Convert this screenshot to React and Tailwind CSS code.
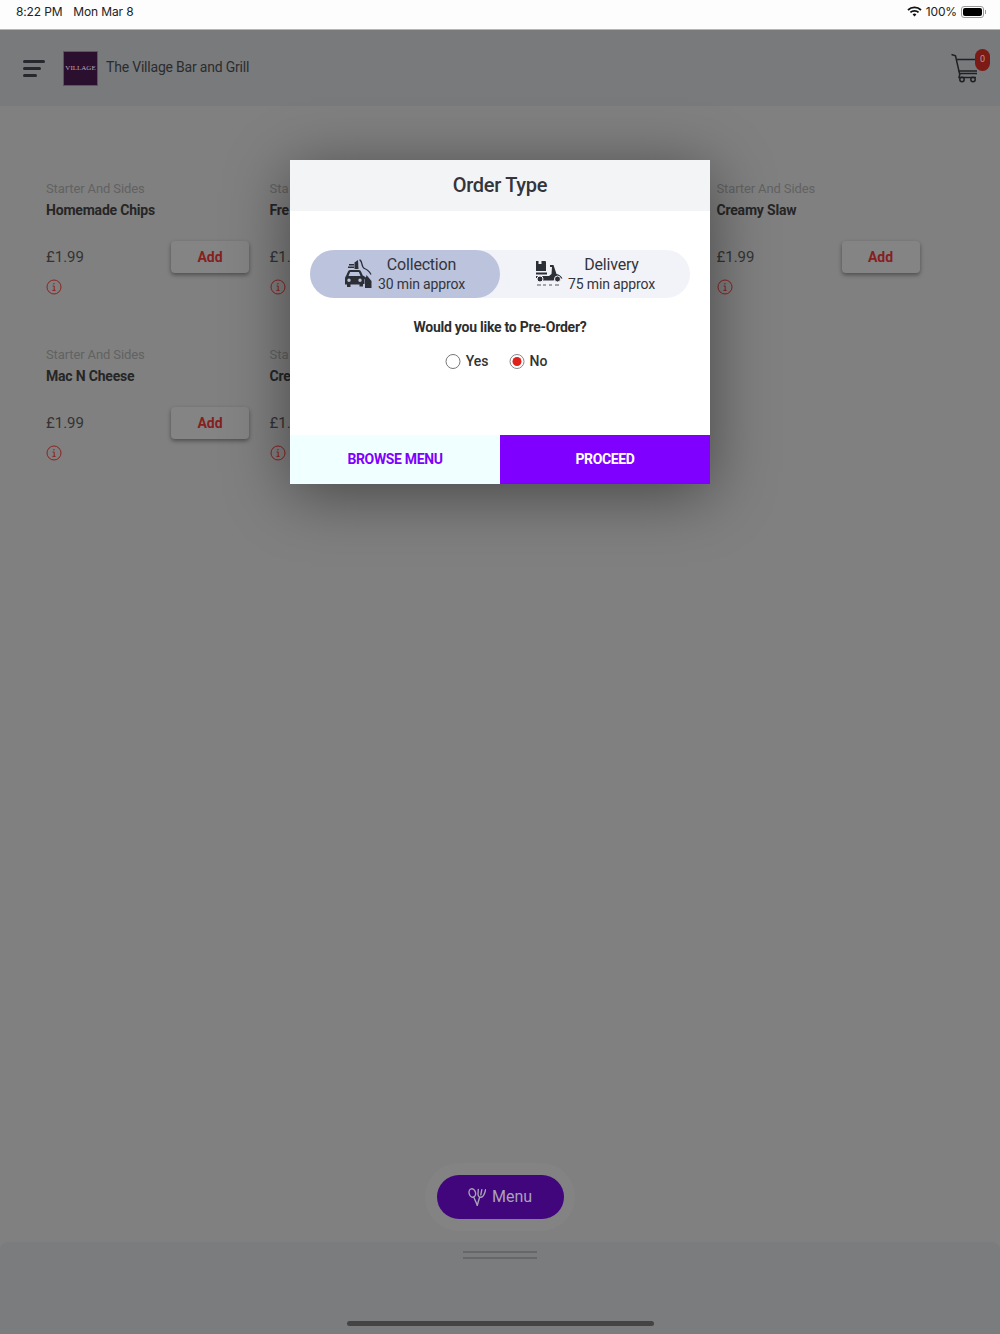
import React from "react";

function InfoIcon() {
  return (
    <svg width="16" height="16" viewBox="0 0 16 16" fill="none" stroke="#8d2222" strokeWidth="1">
      <circle cx="8" cy="8" r="7" />
      <path d="M6.600 7h1.600v4.200M6.400 11.400h3.200" />
      <circle cx="7.900" cy="4.800" r="0.700" fill="#8d2222" stroke="none" />
    </svg>
  );
}

function MenuCard({ name }) {
  return (
    <div className="w-[204px] h-[166px] shrink-0">
      <p className="text-[13px] leading-[16px] text-[#626262] tracking-[-0.12px]">Starter And Sides</p>
      <p className="mt-[3px] text-[14px] leading-[20px] font-bold tracking-[-0.2px] text-[#262626]">{name}</p>
      <div className="mt-[21px] h-[32px] flex items-center justify-between pr-[1px]">
        <span className="text-[15px] text-[#333333]">£1.99</span>
        <div className="w-[78px] h-[32px] rounded-[4px] bg-[#848484] shadow-[0_2px_4px_rgba(0,0,0,0.4)] flex items-center justify-center text-[14px] font-bold tracking-[-0.1px] text-[#861f1f]">
          Add
        </div>
      </div>
      <div className="mt-[6px]">
        <InfoIcon />
      </div>
    </div>
  );
}

// the second column sits behind the modal, only its first letters show
function PeekCard({ name }) {
  return (
    <div className="w-[21px] h-[166px] shrink-0 whitespace-nowrap">
      <p className="text-[13px] leading-[16px] text-[#626262]">Sta</p>
      <p className="mt-[3px] text-[14px] leading-[20px] font-bold tracking-[-0.2px] text-[#262626]">{name}</p>
      <div className="mt-[21px] h-[32px] flex items-center">
        <span className="text-[15px] text-[#333333]">£1.</span>
      </div>
      <div className="mt-[6px]">
        <InfoIcon />
      </div>
    </div>
  );
}

function CollectionIcon() {
  return (
    <svg width="30" height="30" viewBox="0 0 30 30" fill="#2c2f36">
      {/* car */}
      <path
        fillRule="evenodd"
        d="M2 17 4 12.500Q4.500 11 6 11h9q1.500 0 2 1.500l2 4.500q1.500.5 1.500 2v6h-1.500v2.500h-3.500V25.500H6.500V28H3v-2.500H1v-6q0-2 1-2.500Zm2.500 0h12l-1.600-4h-8.800Zm.500 2.500a1.700 1.700 0 1 0 0 3.400 1.700 1.700 0 0 0 0-3.400Zm11 0a1.700 1.700 0 1 0 0 3.400 1.700 1.700 0 0 0 0-3.400Z"
      />
      {/* tray and cup */}
      <rect x="5" y="5" width="5" height="1.500" />
      <rect x="4" y="7.500" width="6" height="1.500" />
      <path d="M10.500 3.500 14 1l.5 9h-4Z" />
      {/* arm and hand */}
      <path d="M21 29v-8.500l-3-3 1-1 3 2 .5-2.500 5 6V29Z" />
      <path d="M15.500 1c3 0 1.500 7 5 8.500s5 2.500 6.500 6" fill="none" stroke="#2c2f36" strokeWidth="1.300" />
    </svg>
  );
}

function DeliveryIcon() {
  return (
    <svg width="30" height="30" viewBox="0 0 30 30" fill="#2c2f36">
      {/* parcel */}
      <path d="M2 2h2.500v3h3V2H11q1 0 1 1v9H2Z" />
      <rect x="2" y="13.500" width="11" height="2" />
      {/* scooter */}
      <path d="M16 6h3.500l3 9q4 .5 6 4.500H21l-1.500 2H8l-1-2.500H2v-2h13l2.500-2L18 8h-2Z" />
      <circle cx="6" cy="20" r="3" stroke="#f2f3f9" />
      <circle cx="23.500" cy="20" r="3" stroke="#f2f3f9" />
      <path d="M3 26h4M9 26h3M15 26h3M21 26h4" fill="none" stroke="#2c2f36" strokeWidth="0.800" />
    </svg>
  );
}

function CartIcon() {
  return (
    <svg width="28" height="30" viewBox="0 0 28 30" fill="none" stroke="#1f2125" strokeWidth="1.500">
      <path d="M0.500 1.500 4.500 2.800 8.500 20.500H26" />
      <path d="M6 6.500H24" />
      <path d="M7.500 18H26" />
      <path d="M9 20.500 8 24.500H25" />
      <circle cx="11" cy="26.500" r="2.200" />
      <circle cx="22" cy="26.500" r="2.200" />
    </svg>
  );
}

function ForkSpoonIcon() {
  return (
    <svg width="18" height="18" viewBox="0 0 18 18" fill="none" stroke="#a9a2b4" strokeWidth="1.400" strokeLinecap="round">
      <ellipse cx="4.300" cy="5" rx="3.200" ry="4.300" transform="rotate(-15 4.300 5)" />
      <path d="M5.800 9.200 9.300 17.300" />
      <path d="M9.300 17.300 11.500 9.500" />
      <path d="M10.300 1.500 10 6.500Q10.500 9.500 13 9.300 16 9 17.600 1.700M13.800 1.700 12.800 6.800" />
    </svg>
  );
}

function StatusBar() {
  return (
    <div className="h-[30px] shrink-0 bg-[#fdfdfd] flex items-start justify-between pl-[16px] pr-[14px] pt-[4px] border-b border-[#b5b5b5] font-['Inter',sans-serif] text-[12px] leading-[15px] tracking-[-0.15px] text-[#222222]">
      <div className="flex gap-[11px]">
        <span>8:22 PM</span>
        <span>Mon Mar 8</span>
      </div>
      <div className="flex items-center gap-[4px]">
        <svg width="15" height="11" viewBox="0 0 15 11" fill="none" stroke="#111111" strokeWidth="1.800">
          <path d="M1 4a9.500 9.500 0 0 1 13 0" />
          <path d="M3.400 6.400a6 6 0 0 1 8.200 0" />
          <path d="M7.500 10.500 5.600 8.400a2.800 2.800 0 0 1 3.800 0Z" fill="#111111" stroke="none" />
        </svg>
        <span>100%</span>
        <div className="flex items-center gap-[1px]">
          <div className="w-[23px] h-[12px] rounded-[3px] border border-[#9a9a9a] p-[1px]">
            <div className="w-full h-full rounded-[2px] bg-black" />
          </div>
          <div className="w-[1px] h-[4px] bg-[#9a9a9a]" />
        </div>
      </div>
    </div>
  );
}

function Header() {
  return (
    <div className="h-[76px] shrink-0 bg-[#797a7c] flex items-center pl-[23px] pr-[10px] font-['Roboto',sans-serif]">
      <div className="w-[22px] flex flex-col gap-[4px]">
        <div className="h-[3px] w-[22px] rounded-full bg-[#26282e]" />
        <div className="h-[3px] w-[18px] rounded-full bg-[#26282e]" />
        <div className="h-[3px] w-[14px] rounded-full bg-[#26282e]" />
      </div>
      <div className="ml-[18px] w-[35px] h-[35px] bg-[#2a0f2e] flex items-center justify-center border border-[#5a5560]">
        <span className="font-['Liberation_Serif',serif] text-[7px] text-[#b9a9bd] uppercase">Village</span>
      </div>
      <span className="ml-[8px] mb-[2px] text-[14px] tracking-[-0.2px] text-[#2b2c2e]">The Village Bar and Grill</span>
      <div className="ml-auto relative w-[39px] h-[36px]">
        <div className="absolute left-0 top-[3px]">
          <CartIcon />
        </div>
        <div className="absolute right-0 top-[-1px] w-[15px] h-[22px] rounded-full bg-[#7c1a16] flex items-center justify-center text-[9px] text-[#b09a98]">
          0
        </div>
      </div>
    </div>
  );
}

function OrderOption({ active, icon, title, eta }) {
  return (
    <div className={`w-[190px] h-[48px] rounded-full flex items-center justify-center gap-[3px] ${active ? "bg-[#bcc3dc]" : ""}`}>
      {icon}
      <div className="w-[90px] pb-[2px] flex flex-col items-center text-[#33353b]">
        <span className="text-[16px] leading-[21px] tracking-[-0.2px]">{title}</span>
        <span className="text-[14px] leading-[18px] tracking-[-0.15px]">{eta}</span>
      </div>
    </div>
  );
}

function OrderTypeModal() {
  return (
    <div className="absolute left-[290px] top-[160px] w-[420px] h-[324px] bg-white flex flex-col shadow-[0_10px_60px_rgba(0,0,0,0.45)] font-['Roboto',sans-serif]">
      <div className="h-[51px] pb-[1px] bg-[#f3f4f6] flex items-center justify-center text-[20px] font-medium tracking-[-0.3px] text-[#33353a]">
        Order Type
      </div>
      <div className="flex-1 flex flex-col items-center">
        <div className="mt-[39px] w-[380px] h-[48px] rounded-full bg-[#f2f3f9] flex">
          <OrderOption active icon={<CollectionIcon />} title="Collection" eta="30 min approx" />
          <OrderOption icon={<DeliveryIcon />} title="Delivery" eta="75 min approx" />
        </div>
        <p className="mt-[20px] text-[14px] leading-[18px] font-bold tracking-[-0.25px] text-[#2e2e2e]">Would you like to Pre-Order?</p>
        <div className="mt-[15px] -translate-x-[3.500px] flex items-center text-[14px] text-[#333333] font-medium">
          <div className="w-[15px] h-[15px] rounded-full border border-[#777777]" />
          <span className="ml-[5px]">Yes</span>
          <div className="ml-[21px] w-[15px] h-[15px] rounded-full border border-[#888888] flex items-center justify-center">
            <div className="w-[9px] h-[9px] rounded-full bg-[#e0201b]" />
          </div>
          <span className="ml-[5px]">No</span>
        </div>
      </div>
      <div className="h-[49px] flex text-[14px] font-bold tracking-[-0.35px]">
        <div className="w-1/2 bg-[#f0ffff] flex items-center justify-center text-[#8000ff]">BROWSE MENU</div>
        <div className="w-1/2 bg-[#8000ff] flex items-center justify-center text-white">PROCEED</div>
      </div>
    </div>
  );
}

export default function App() {
  return (
    <div className="relative w-[1000px] h-[1334px] overflow-hidden bg-[#808080] flex flex-col font-['Roboto',sans-serif]">
      <StatusBar />
      <Header />
      <div className="flex-1 pt-[75px] pl-[46px]">
        <div className="flex">
          <MenuCard name="Homemade Chips" />
          <div className="w-[19.500px] shrink-0" />
          <PeekCard name="Fre" />
          <div className="w-[426px] shrink-0" />
          <MenuCard name="Creamy Slaw" />
        </div>
        <div className="flex">
          <MenuCard name="Mac N Cheese" />
          <div className="w-[19.500px] shrink-0" />
          <PeekCard name="Cre" />
        </div>
      </div>
      <div className="flex justify-center h-[79px] shrink-0">
        <div className="w-[150px] h-[68px] rounded-full bg-[#838383] flex items-center justify-center">
          <div className="w-[127px] h-[44px] rounded-full bg-[#41057c] flex items-center justify-center gap-[6px] text-[16px] text-[#a9a2b4]">
            <ForkSpoonIcon />
            <span>Menu</span>
          </div>
        </div>
      </div>
      <div className="h-[92px] shrink-0 rounded-t-[8px] bg-[#7b7c7e] flex flex-col items-center">
        <div className="mt-[9px] w-[74px] flex flex-col gap-[4px]">
          <div className="h-[2px] bg-[#66676a]" />
          <div className="h-[2px] bg-[#66676a]" />
        </div>
        <div className="mt-auto mb-[8px] w-[307px] h-[5px] rounded-full bg-[#444444]" />
      </div>
      <OrderTypeModal />
    </div>
  );
}
